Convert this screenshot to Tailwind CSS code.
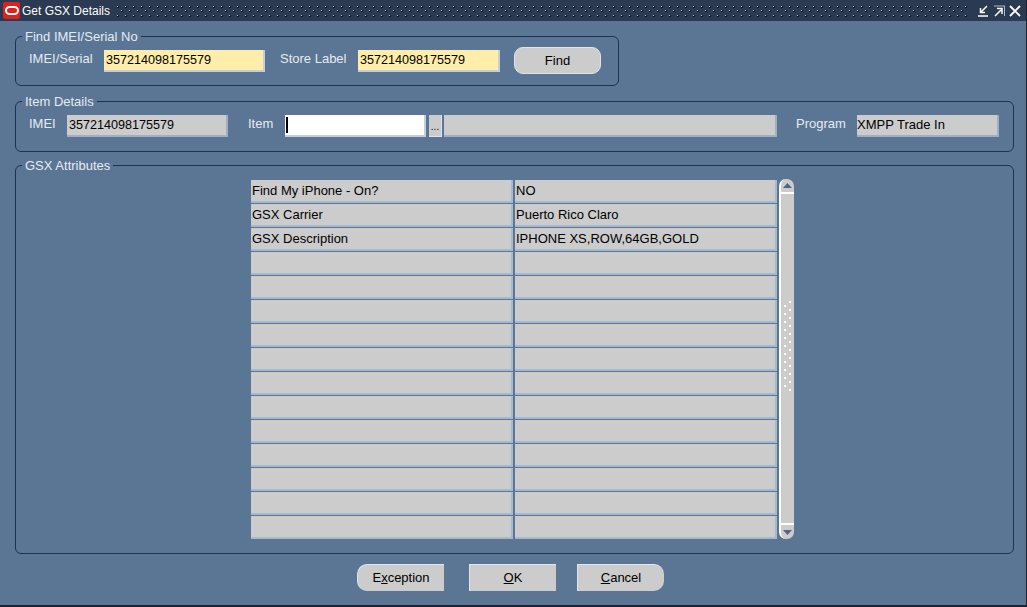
<!DOCTYPE html>
<html lang="en">
<head>
  <meta charset="UTF-8" />
  <title>Get GSX Details</title>
  <script src="https://cdn.jsdelivr.net/npm/@tailwindcss/browser@4"></script>
</head>
<body class="w-[1027px] h-[607px] overflow-hidden bg-[#5b7595] font-['Liberation_Sans',Arial,sans-serif] text-[13px] text-black">
  <div class="w-[1027px] h-[607px] flex flex-col border-r border-b-2 border-r-[#1a2230] border-b-[#1a2230]">

    <!-- title bar -->
    <div class="h-[21px] shrink-0 flex items-center bg-[#2a3a52] text-white">
      <div class="w-[17px] h-[17px] ml-[3px] bg-[#e0201c] rounded-[2px] flex items-center justify-center">
        <div class="w-[14px] h-[9px] rounded-[5px] border-2 border-white"></div>
      </div>
      <span class="ml-[2px] w-[95px] mt-[1px] text-[12px] whitespace-nowrap">Get GSX Details</span>
      <svg class="w-[851px] h-[11px] mt-[2px]" viewBox="0 0 851 11">
        <defs>
          <pattern id="dots" width="8" height="9" patternUnits="userSpaceOnUse">
            <rect x="0" y="0" width="2" height="2" fill="#0f1726" />
            <rect x="0" y="0" width="1" height="1" fill="#c3cbd6" />
            <rect x="4" y="4" width="2" height="2" fill="#0f1726" />
            <rect x="4" y="4" width="1" height="1" fill="#c3cbd6" />
          </pattern>
        </defs>
        <rect width="851" height="11" fill="url(#dots)" />
      </svg>
      <svg class="ml-[9px] w-[12px] h-[12px]" viewBox="0 0 12 12" fill="none" stroke="white" stroke-width="1.5">
        <path d="M10 1 4 7M3.500 3v4.500H8M1 11h10" />
      </svg>
      <svg class="ml-[4px] w-[12px] h-[12px]" viewBox="0 0 12 12" fill="none" stroke="white" stroke-width="1.5">
        <path d="M1 1h11M11.500 1v10" stroke="#aeb8c6" stroke-width="1" />
        <path d="M2 11 8 5M4 3.500h5V9" />
      </svg>
      <svg class="ml-[4px] w-[12px] h-[12px]" viewBox="0 0 12 12" fill="none" stroke="white" stroke-width="1.800">
        <path d="M1 1l10 10M11 1 1 11" />
      </svg>
    </div>

    <div class="flex-1 pl-[15px] pr-[12px] pt-[15px] flex flex-col">

      <!-- Find IMEI/Serial No -->
      <section class="relative w-[604px] h-[50px] shrink-0 border border-[#1c3350] rounded-[6px] flex items-center pl-[13px]">
        <span class="absolute -top-[7px] left-[6px] px-[3px] bg-[#5b7595] text-[#e6ebf1] leading-[14px]">Find IMEI/Serial No</span>
        <span class="w-[75px] text-[#e6ebf1] -mt-[5px]">IMEI/Serial</span>
        <div class="w-[161px] h-[22px] pl-[2px] flex items-center text-[12.6px] bg-[#ffeeaa] border-r-2 border-b-2 border-r-[#c4cfdb] border-b-[#c4cfdb]">357214098175579</div>
        <span class="ml-[15px] w-[78px] text-[#e6ebf1] -mt-[5px] whitespace-nowrap">Store Label</span>
        <div class="w-[142px] h-[22px] pl-[2px] flex items-center text-[12.6px] bg-[#ffeeaa] border-r-2 border-b-2 border-r-[#c4cfdb] border-b-[#c4cfdb]">357214098175579</div>
        <button class="ml-[14px] w-[87px] h-[27px] -mt-[1px] bg-[#cccccc] rounded-[9px] border border-[#dfe5ec] text-center">Find</button>
      </section>

      <!-- Item Details -->
      <section class="relative mt-[15px] w-[999px] h-[51px] shrink-0 border border-[#1c3350] rounded-[6px] flex items-center pl-[13px]">
        <span class="absolute -top-[7px] left-[6px] px-[3px] bg-[#5b7595] text-[#e6ebf1] leading-[14px]">Item Details</span>
        <span class="w-[38px] text-[#e6ebf1] -mt-[5px]">IMEI</span>
        <div class="w-[161px] h-[22px] -mt-[1px] pl-[2px] flex items-center text-[12.6px] bg-[#cccccc] border-r-2 border-b-2 border-r-[#9fb0c4] border-b-[#9fb0c4]">357214098175579</div>
        <span class="ml-[20px] w-[37px] text-[#e6ebf1] -mt-[5px]">Item</span>
        <div class="w-[141px] h-[22px] -mt-[1px] pl-[1px] flex items-center bg-white border-r-2 border-b-2 border-r-[#c4cfdb] border-b-[#c4cfdb]"><div class="w-[2px] h-[16px] bg-black"></div></div>
        <div class="ml-[3px] w-[13px] h-[22px] -mt-[1px] bg-[#cccccc] border-r border-b border-[#dfe5ec] text-[10px] leading-[23px] text-center">...</div>
        <div class="ml-[2px] w-[333px] h-[22px] -mt-[1px] bg-[#cccccc] border-r-2 border-b-2 border-r-[#9fb0c4] border-b-[#9fb0c4]"></div>
        <span class="ml-[19px] w-[61px] text-[#e6ebf1] -mt-[5px]">Program</span>
        <div class="w-[142px] h-[22px] -mt-[1px] flex items-center bg-[#cccccc] border-r-2 border-b-2 border-r-[#9fb0c4] border-b-[#9fb0c4]">XMPP Trade In</div>
      </section>

      <!-- GSX Attributes -->
      <section class="relative mt-[13px] w-[999px] h-[389px] shrink-0 border border-[#1c3350] rounded-[6px] pl-[235px] pt-[14px] flex">
        <span class="absolute -top-[7px] left-[6px] px-[3px] bg-[#5b7595] text-[#e6ebf1] leading-[14px]">GSX Attributes</span>
        <div class="grid grid-cols-[262px_262px] gap-x-[2px] gap-y-[1px] auto-rows-[23px] w-[526px] h-[359px]">
          <div class="bg-[#cccccc] pl-[1px] flex items-center border-r-2 border-b-2 border-r-[#a9b8ca] border-b-[#a9b8ca]">Find My iPhone - On?</div>
          <div class="bg-[#cccccc] pl-[1px] flex items-center border-r-2 border-b-2 border-r-[#a9b8ca] border-b-[#a9b8ca]">NO</div>
          <div class="bg-[#cccccc] pl-[1px] flex items-center border-r-2 border-b-2 border-r-[#a9b8ca] border-b-[#a9b8ca]">GSX Carrier</div>
          <div class="bg-[#cccccc] pl-[1px] flex items-center border-r-2 border-b-2 border-r-[#a9b8ca] border-b-[#a9b8ca]">Puerto Rico Claro</div>
          <div class="bg-[#cccccc] pl-[1px] flex items-center border-r-2 border-b-2 border-r-[#a9b8ca] border-b-[#a9b8ca]">GSX Description</div>
          <div class="bg-[#cccccc] pl-[1px] flex items-center border-r-2 border-b-2 border-r-[#a9b8ca] border-b-[#a9b8ca]">IPHONE XS,ROW,64GB,GOLD</div>
          <div class="bg-[#cccccc] border-r-2 border-b-2 border-r-[#a9b8ca] border-b-[#a9b8ca]"></div>
          <div class="bg-[#cccccc] border-r-2 border-b-2 border-r-[#a9b8ca] border-b-[#a9b8ca]"></div>
          <div class="bg-[#cccccc] border-r-2 border-b-2 border-r-[#a9b8ca] border-b-[#a9b8ca]"></div>
          <div class="bg-[#cccccc] border-r-2 border-b-2 border-r-[#a9b8ca] border-b-[#a9b8ca]"></div>
          <div class="bg-[#cccccc] border-r-2 border-b-2 border-r-[#a9b8ca] border-b-[#a9b8ca]"></div>
          <div class="bg-[#cccccc] border-r-2 border-b-2 border-r-[#a9b8ca] border-b-[#a9b8ca]"></div>
          <div class="bg-[#cccccc] border-r-2 border-b-2 border-r-[#a9b8ca] border-b-[#a9b8ca]"></div>
          <div class="bg-[#cccccc] border-r-2 border-b-2 border-r-[#a9b8ca] border-b-[#a9b8ca]"></div>
          <div class="bg-[#cccccc] border-r-2 border-b-2 border-r-[#a9b8ca] border-b-[#a9b8ca]"></div>
          <div class="bg-[#cccccc] border-r-2 border-b-2 border-r-[#a9b8ca] border-b-[#a9b8ca]"></div>
          <div class="bg-[#cccccc] border-r-2 border-b-2 border-r-[#a9b8ca] border-b-[#a9b8ca]"></div>
          <div class="bg-[#cccccc] border-r-2 border-b-2 border-r-[#a9b8ca] border-b-[#a9b8ca]"></div>
          <div class="bg-[#cccccc] border-r-2 border-b-2 border-r-[#a9b8ca] border-b-[#a9b8ca]"></div>
          <div class="bg-[#cccccc] border-r-2 border-b-2 border-r-[#a9b8ca] border-b-[#a9b8ca]"></div>
          <div class="bg-[#cccccc] border-r-2 border-b-2 border-r-[#a9b8ca] border-b-[#a9b8ca]"></div>
          <div class="bg-[#cccccc] border-r-2 border-b-2 border-r-[#a9b8ca] border-b-[#a9b8ca]"></div>
          <div class="bg-[#cccccc] border-r-2 border-b-2 border-r-[#a9b8ca] border-b-[#a9b8ca]"></div>
          <div class="bg-[#cccccc] border-r-2 border-b-2 border-r-[#a9b8ca] border-b-[#a9b8ca]"></div>
          <div class="bg-[#cccccc] border-r-2 border-b-2 border-r-[#a9b8ca] border-b-[#a9b8ca]"></div>
          <div class="bg-[#cccccc] border-r-2 border-b-2 border-r-[#a9b8ca] border-b-[#a9b8ca]"></div>
          <div class="bg-[#cccccc] border-r-2 border-b-2 border-r-[#a9b8ca] border-b-[#a9b8ca]"></div>
          <div class="bg-[#cccccc] border-r-2 border-b-2 border-r-[#a9b8ca] border-b-[#a9b8ca]"></div>
          <div class="bg-[#cccccc] border-r-2 border-b-2 border-r-[#a9b8ca] border-b-[#a9b8ca]"></div>
          <div class="bg-[#cccccc] border-r-2 border-b-2 border-r-[#a9b8ca] border-b-[#a9b8ca]"></div>
        </div>
        <!-- scrollbar -->
        <div class="ml-[2px] -mt-[1px] w-[15px] h-[360px] bg-[#cccccc] border-l-2 border-l-white rounded-[7px] flex flex-col items-center">
          <div class="w-full h-[15px] border-b-2 border-b-white flex items-center justify-center">
            <svg class="w-[9px] h-[5px]" viewBox="0 0 9 5"><path d="M4.500 0 9 5H0z" fill="#4f6785" /></svg>
          </div>
          <svg class="mt-[107px] w-[10px] h-[92px]" viewBox="0 0 10 92">
            <defs>
              <pattern id="grip" width="10" height="8" patternUnits="userSpaceOnUse">
                <rect x="1" y="4" width="2" height="2" fill="white" />
                <rect x="6" y="0" width="2" height="2" fill="white" />
              </pattern>
            </defs>
            <rect width="10" height="92" fill="url(#grip)" />
          </svg>
          <div class="mt-auto w-full h-[16px] border-t-2 border-t-white flex items-center justify-center">
            <svg class="w-[9px] h-[5px]" viewBox="0 0 9 5"><path d="M0 0h9L4.500 5z" fill="#4f6785" /></svg>
          </div>
        </div>
      </section>

      <!-- bottom buttons -->
      <div class="mt-[10px] pl-[342px] flex">
        <button class="w-[87px] h-[27px] bg-[#cccccc] rounded-l-[10px] border-t border-l border-[#dfe5ec] text-center">E<u>x</u>ception</button>
        <button class="ml-[25px] w-[87px] h-[27px] bg-[#cccccc] border-t border-l border-[#dfe5ec] text-center"><u>O</u>K</button>
        <button class="ml-[21px] w-[87px] h-[27px] bg-[#cccccc] rounded-r-[10px] border-t border-l border-[#dfe5ec] text-center"><u>C</u>ancel</button>
      </div>
    </div>
  </div>
</body>
</html>
